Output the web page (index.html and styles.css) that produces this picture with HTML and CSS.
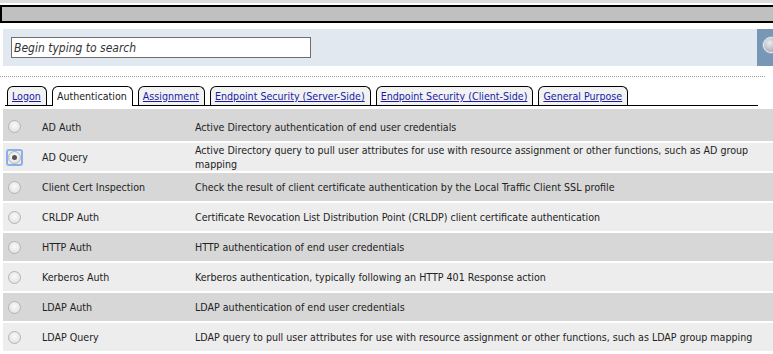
FILE: index.html
```html
<!DOCTYPE html>
<html>
<head>
 <meta charset="UTF-8">
 <title>Access Policy - Item Selection</title>
 <link rel="stylesheet" href="styles.css">
</head>
<body>

<div class="topstrip"></div>
<div class="titlebar"></div>

<div class="searchrow">
  <div class="searchpanel">
    <input type="text" class="searchbox" placeholder="Begin typing to search">
  </div>
  <div class="searchbtn"><span class="lens"></span></div>
</div>

<div class="divider"></div>

<div class="tabs">
  <div class="tab"><a href="#">Logon</a></div>
  <div class="tab active">Authentication</div>
  <div class="tab"><a href="#">Assignment</a></div>
  <div class="tab"><a href="#">Endpoint Security (Server-Side)</a></div>
  <div class="tab"><a href="#">Endpoint Security (Client-Side)</a></div>
  <div class="tab"><a href="#">General Purpose</a></div>
</div>

<table class="items">
  <tr class="first">
    <td class="sel"><span class="radio"></span></td>
    <td class="name">AD Auth</td>
    <td class="desc">Active Directory authentication of end user credentials</td>
  </tr>
  <tr>
    <td class="sel"><span class="radio checked"></span></td>
    <td class="name">AD Query</td>
    <td class="desc">Active Directory query to pull user attributes for use with resource assignment or other functions, such as AD group mapping</td>
  </tr>
  <tr>
    <td class="sel"><span class="radio"></span></td>
    <td class="name">Client Cert Inspection</td>
    <td class="desc">Check the result of client certificate authentication by the Local Traffic Client SSL profile</td>
  </tr>
  <tr>
    <td class="sel"><span class="radio"></span></td>
    <td class="name">CRLDP Auth</td>
    <td class="desc">Certificate Revocation List Distribution Point (CRLDP) client certificate authentication</td>
  </tr>
  <tr>
    <td class="sel"><span class="radio"></span></td>
    <td class="name">HTTP Auth</td>
    <td class="desc">HTTP authentication of end user credentials</td>
  </tr>
  <tr>
    <td class="sel"><span class="radio"></span></td>
    <td class="name">Kerberos Auth</td>
    <td class="desc">Kerberos authentication, typically following an HTTP 401 Response action</td>
  </tr>
  <tr>
    <td class="sel"><span class="radio"></span></td>
    <td class="name">LDAP Auth</td>
    <td class="desc">LDAP authentication of end user credentials</td>
  </tr>
  <tr>
    <td class="sel"><span class="radio"></span></td>
    <td class="name">LDAP Query</td>
    <td class="desc">LDAP query to pull user attributes for use with resource assignment or other functions, such as LDAP group mapping</td>
  </tr>
</table>

</body>
</html>
```

FILE: styles.css
```css
html {
  overflow: hidden;
}
body {
  margin: 0;
  font-family: "DejaVu Sans Condensed", "Liberation Sans", Arial, sans-serif;
  font-size: 10.6px;
  color: #222;
  background: #fff;
}
.topstrip {
  height: 3px;
  background: #dcdcdc;
  margin-bottom: 2px;
}
.titlebar {
  height: 14px;
  background: #c0c0c0;
  border: 2px solid #000;
  border-right: none;
}
.searchrow {
  display: flex;
  margin: 6px 0 0 3px;
  width: 800px;
}
.searchpanel {
  width: 754px;
  height: 37px;
  padding: 8px 0 0 8px;
  box-sizing: border-box;
  background: #e1e8ef;
}
.searchbox {
  width: 300px;
  height: 21px;
  box-sizing: border-box;
  border: 1px solid #6f6f6f;
  padding: 0 2px;
  margin: 0;
  font-family: "DejaVu Sans Condensed", "Liberation Sans", Arial, sans-serif;
  font-size: 12px;
  font-style: italic;
  background: #fff;
}
.searchbox::placeholder {
  color: #333;
}
.searchbtn {
  width: 40px;
  height: 37px;
  background: #7896b5;
  padding: 8px 0 0 6px;
  box-sizing: border-box;
}
.lens {
  display: block;
  width: 14px;
  height: 14px;
  border-radius: 50%;
  border: 1px solid #f4f4f4;
  background: radial-gradient(circle at 40% 35%, #e8edf2, #aab4be 70%);
  box-shadow: 0 0 0 1px #9aaabb;
}
.divider {
  margin-top: 10px;
  width: 765px;
  border-bottom: 1px dotted #999;
}
.tabs {
  display: flex;
  gap: 5px;
  margin: 10px 0 0 5px;
  padding-left: 2px;
  width: 753px;
  border-bottom: 1px solid #000;
  box-sizing: border-box;
  height: 19px;
  align-items: flex-end;
}
.tab {
  height: 18px;
  line-height: 19px;
  padding: 0 5px 0 4px;
  border: 1px solid #000;
  border-bottom: none;
  border-radius: 6px 6px 0 0;
  background: #f2f2f2;
  white-space: nowrap;
}
.tab a {
  color: #1a1aa6;
  text-decoration: underline;
}
.tab.active {
  background: #fff;
  height: 19px;
  margin-bottom: -1px;
}
.items {
  margin: 1px 0 0 3px;
  border-collapse: separate;
  border-spacing: 0 2px;
  width: 790px;
}
.items td {
  height: 28px;
  padding: 0;
  vertical-align: middle;
  line-height: 14px;
}
.items tr.first td {
  height: 29px;
  padding-top: 3px;
}
.items tr:nth-child(odd) td {
  background: #d7d7d7;
}
.items tr:nth-child(even) td {
  background: #ededed;
}
.sel {
  width: 39px;
}
.name {
  width: 153px;
}
.items td.desc {
  padding-right: 13px;
}
.radio {
  display: block;
  width: 11px;
  height: 11px;
  margin-left: 5px;
  border-radius: 50%;
  border: 1px solid #b4b4b4;
  background: radial-gradient(circle at 50% 40%, #fafafa, #dcdcdc);
  position: relative;
}
.radio.checked::before {
  content: "";
  position: absolute;
  left: -3px;
  top: -3px;
  width: 13px;
  height: 13px;
  border: 2px solid #8ab0ea;
  border-radius: 3px;
}
.radio.checked::after {
  content: "";
  position: absolute;
  left: 3px;
  top: 3px;
  width: 5px;
  height: 5px;
  border-radius: 50%;
  background: #555;
}
```
